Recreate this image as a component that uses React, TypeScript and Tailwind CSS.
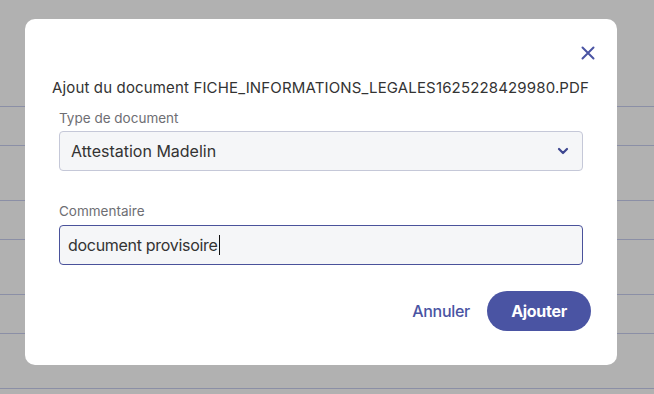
// Rows of the page behind the scrim: only their divider lines show through.
const rows = [107, 39, 55, 39, 55, 39, 55]

function ChevronDown() {
  return (
    <svg width="14" height="14" viewBox="0 0 14 14" fill="none" aria-hidden="true">
      <path d="M3 5l4 4 4-4" stroke="#3d4690" strokeWidth="2.2" strokeLinecap="round" strokeLinejoin="round" />
    </svg>
  )
}

function CloseIcon() {
  return (
    <svg width="14" height="14" viewBox="0 0 14 14" fill="none" aria-hidden="true">
      <path d="M1.5 1.5l11 11M12.5 1.5l-11 11" stroke="#4a54a3" strokeWidth="2" strokeLinecap="round" />
    </svg>
  )
}

export default function App() {
  return (
    <div
      className="relative h-[394px] w-[654px] overflow-hidden bg-[#b1b1b1]"
      style={{ fontFamily: 'Inter, "Noto Sans", sans-serif' }}
    >
      {/* page underneath */}
      <div className="flex flex-col">
        {rows.map((h, i) => (
          <div key={i} className="border-b border-[#8b8fa6]" style={{ height: h }} />
        ))}
      </div>

      {/* dialog */}
      <div className="absolute left-[25px] top-[19px] flex h-[346px] w-[592px] flex-col rounded-[10px] bg-white pl-[27px] pr-[26px] pt-[26px]">
        <div className="flex justify-end">
          <button type="button" className="mr-[-5px] flex h-[16px] w-[16px] items-center justify-center">
            <CloseIcon />
          </button>
        </div>

        <h2 className="mt-[17px] text-[15px] leading-[20px] tracking-[0.15px] text-[#333]">
          Ajout du document FICHE_INFORMATIONS_LEGALES1625228429980.PDF
        </h2>

        <div className="ml-[7px] mt-[11px] flex flex-col">
          <label className="text-[13.5px] leading-[18px] text-[#6e6e73]">Type de document</label>
          <div className="mr-[8px] mt-[4px] flex h-[40px] items-center justify-between rounded-[4px] border border-[#c5c8d8] bg-[#f5f6f8] pl-[11px] pr-[12px]">
            <span className="text-[16px] text-[#333]">Attestation Madelin</span>
            <ChevronDown />
          </div>

          <label className="mt-[31px] text-[13.5px] leading-[18px] text-[#6e6e73]">Commentaire</label>
          <div className="mr-[8px] mt-[5px] flex h-[40px] items-center rounded-[4px] border border-[#4a529b] bg-[#f5f6f8] pl-[8px]">
            <span className="text-[16px] tracking-[-0.3px] text-[#333]">document provisoire</span>
            <span className="ml-px h-[20px] w-px bg-[#111]" />
          </div>

          <div className="mt-[26px] flex items-center justify-end gap-[17px]">
            <button type="button" className="text-[16px] font-medium tracking-[-0.3px] text-[#4a54a3]">
              Annuler
            </button>
            <button
              type="button"
              className="h-[40px] w-[104px] rounded-full bg-[#4a54a3] text-[16px] font-bold tracking-[-0.3px] text-white"
            >
              Ajouter
            </button>
          </div>
        </div>
      </div>
    </div>
  )
}
